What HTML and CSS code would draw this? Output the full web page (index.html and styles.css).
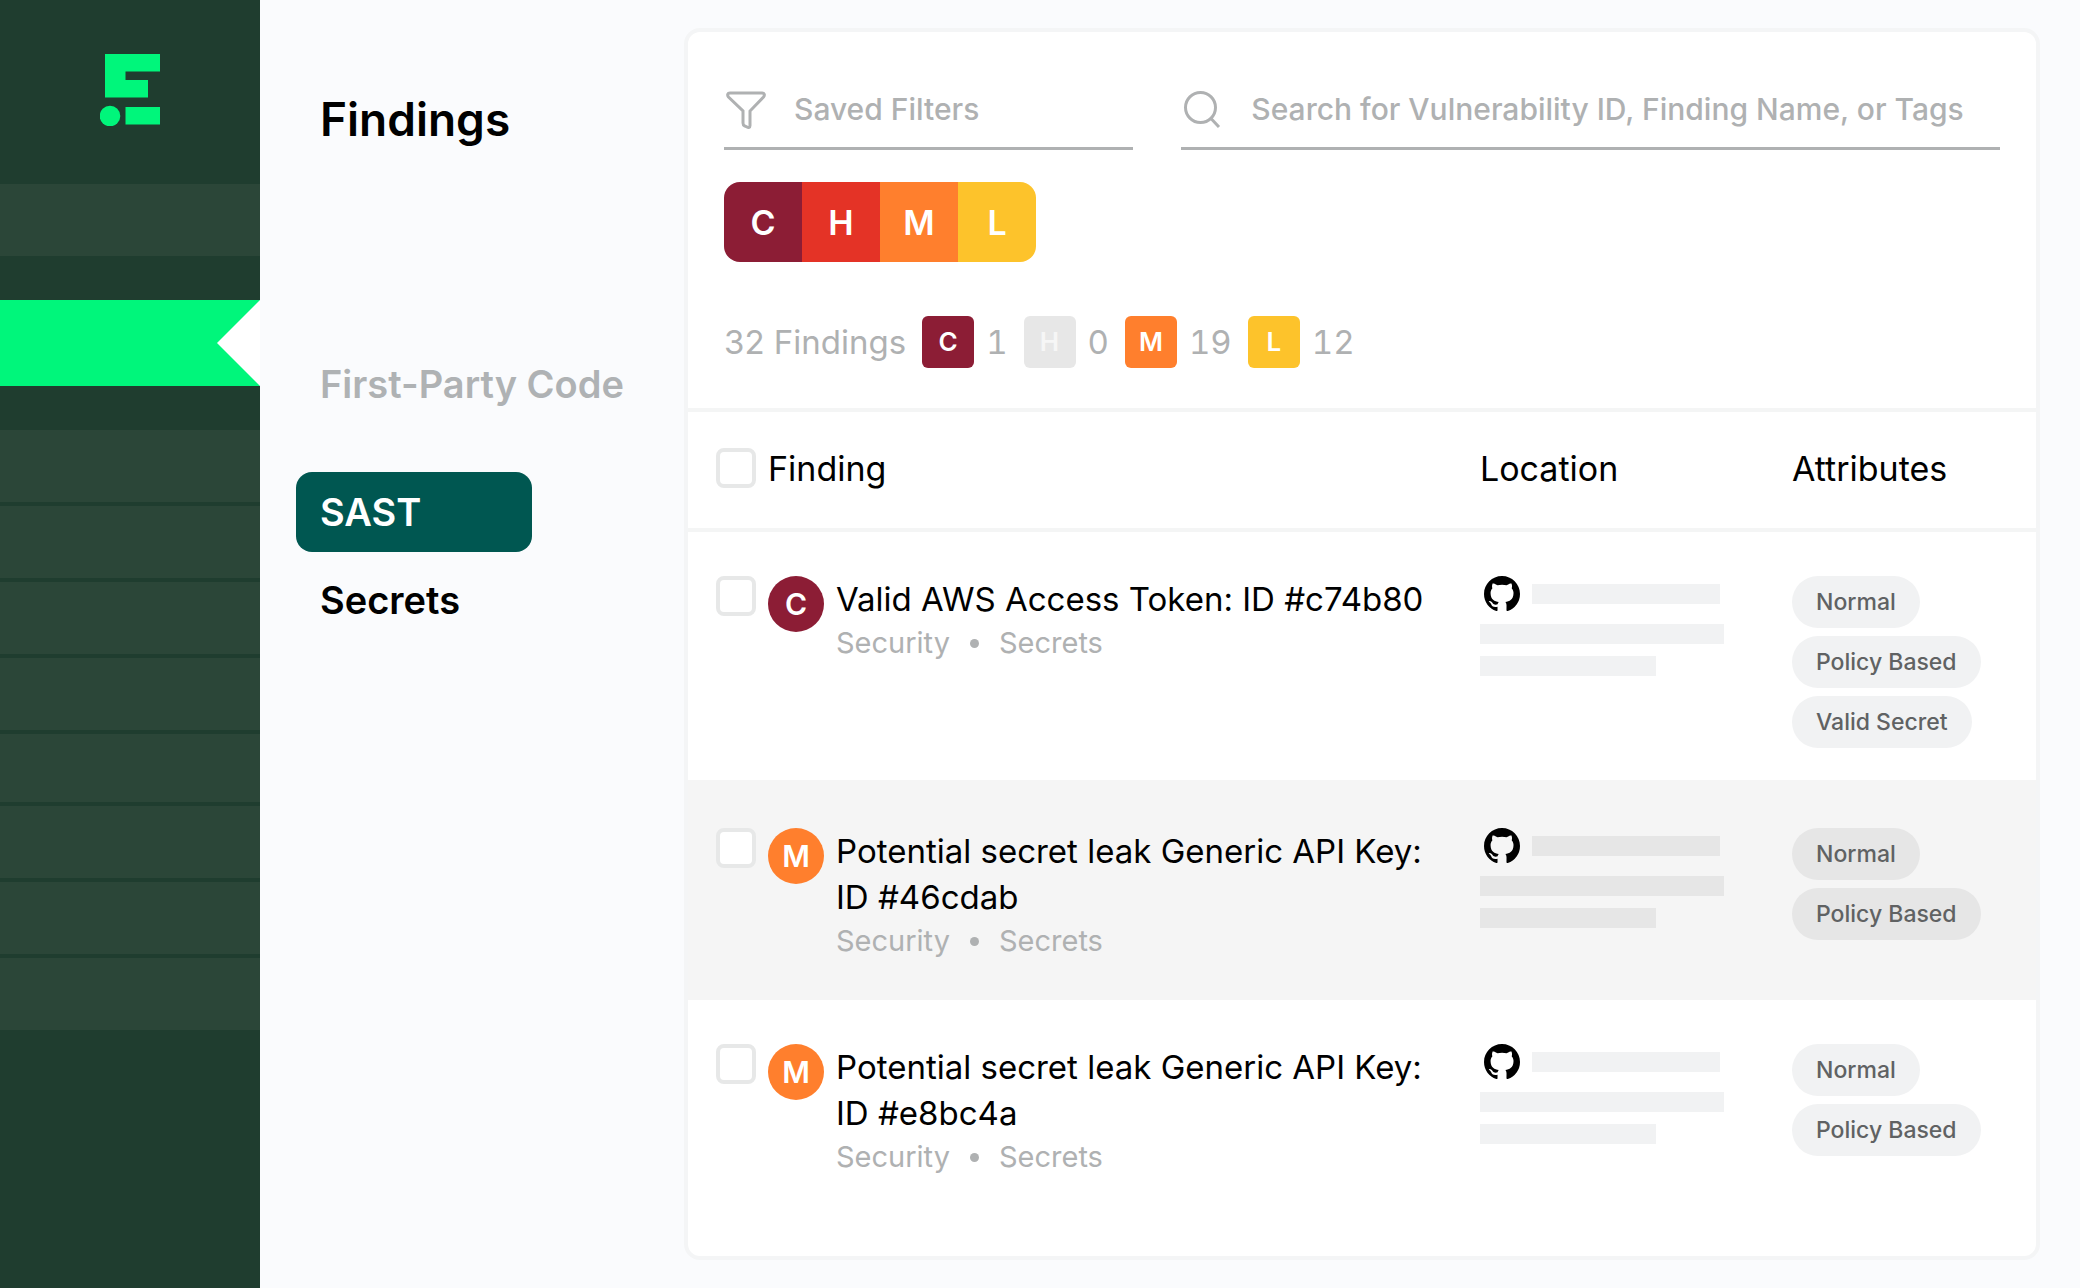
FILE: index.html
```
<!DOCTYPE html>
<html lang="en">
    <head>
        <meta charset="UTF-8">
        <meta name="viewport" content="width=device-width, initial-scale=1.0">
        <title>Findings</title>
        <link rel="stylesheet" href="styles.css">
    </head>
    <body>
        <svg class="sprite" aria-hidden="true">
            <symbol id="github" viewBox="0 0 16 16">
                <path d="M8 0C3.58 0 0 3.58 0 8c0 3.54 2.29 6.53 5.47 7.59.4.07.55-.17.55-.38 0-.19-.01-.82-.01-1.49-2.01.37-2.53-.49-2.69-.94-.09-.23-.48-.94-.82-1.13-.28-.15-.68-.52-.01-.53.63-.01 1.08.58 1.23.82.72 1.21 1.87.87 2.33.66.07-.52.28-.87.51-1.07-1.78-.2-3.64-.89-3.64-3.95 0-.87.31-1.59.82-2.15-.08-.2-.36-1.02.08-2.12 0 0 .67-.21 2.2.82.64-.18 1.32-.27 2-.27s1.36.09 2 .27c1.53-1.04 2.2-.82 2.2-.82.44 1.1.16 1.92.08 2.12.51.56.82 1.27.82 2.15 0 3.07-1.87 3.75-3.65 3.95.29.25.54.73.54 1.48 0 1.07-.01 1.93-.01 2.2 0 .21.15.46.55.38A8.01 8.01 0 0 0 16 8c0-4.42-3.58-8-8-8z"/>
            </symbol>
        </svg>

        <div class="app">
            <nav class="sidebar" aria-label="Main">
                <a href="#" class="logo" aria-label="Home">
                    <svg width="60" height="72" viewBox="0 0 60 72" fill="#00f67b">
                        <path d="M5 0h55v17.5H25.5v8.5H48v17.5H5z"/>
                        <circle cx="10" cy="62" r="10.3"/>
                        <path d="M25.5 53H60v17.5H25.5z"/>
                    </svg>
                </a>
                <a href="#" class="sidebar-item" aria-label="Dashboard"></a>
                <a href="#" class="sidebar-item active" aria-label="Findings"></a>
                <div class="sidebar-group">
                    <a href="#" class="sidebar-item" aria-label="Item 1"></a>
                    <a href="#" class="sidebar-item" aria-label="Item 2"></a>
                    <a href="#" class="sidebar-item" aria-label="Item 3"></a>
                    <a href="#" class="sidebar-item" aria-label="Item 4"></a>
                    <a href="#" class="sidebar-item short" aria-label="Item 5"></a>
                    <a href="#" class="sidebar-item" aria-label="Item 6"></a>
                    <a href="#" class="sidebar-item" aria-label="Item 7"></a>
                    <a href="#" class="sidebar-item" aria-label="Item 8"></a>
                </div>
            </nav>

            <aside class="subnav">
                <h1>Findings</h1>
                <h2>First-Party Code</h2>
                <a href="#" class="subnav-link selected">SAST</a>
                <a href="#" class="subnav-link">Secrets</a>
            </aside>

            <main class="panel">
                <div class="toolbar">
                    <div class="fields">
                        <button type="button" class="field">
                            <svg class="field-icon" viewBox="0 0 42 40">
                                <path d="M6 4H38C40.5 4 41 6 39.5 8L26 22V36.500C26 38.500 24.500 39 23 38L20.500 36.800C19.500 36.300 19 35.500 19 34V22L4.500 8C3 6 3.500 4 6 4Z"/>
                            </svg>
                            Saved Filters
                        </button>
                        <label class="field">
                            <svg class="field-icon" viewBox="0 0 42 40">
                                <circle cx="19.500" cy="18.500" r="15"/>
                                <path d="M29.500 29L38 38"/>
                            </svg>
                            <input type="text" placeholder="Search for Vulnerability ID, Finding Name, or Tags" aria-label="Search">
                        </label>
                    </div>

                    <div class="severity-filter">
                        <button type="button" class="critical">C</button>
                        <button type="button" class="high">H</button>
                        <button type="button" class="medium">M</button>
                        <button type="button" class="low">L</button>
                    </div>

                    <div class="summary">
                        <span>32 Findings</span>
                        <span class="count"><b class="badge critical">C</b>1</span>
                        <span class="count"><b class="badge none">H</b>0</span>
                        <span class="count"><b class="badge medium">M</b>19</span>
                        <span class="count"><b class="badge low">L</b>12</span>
                    </div>
                </div>

                <table class="findings">
                    <thead>
                        <tr>
                            <th class="col-check"><input type="checkbox" aria-label="Select all"></th>
                            <th>Finding</th>
                            <th class="col-location">Location</th>
                            <th class="col-attributes">Attributes</th>
                        </tr>
                    </thead>
                    <tbody>
                        <tr>
                            <td><input type="checkbox" aria-label="Select #c74b80"></td>
                            <td>
                                <div class="finding">
                                    <span class="dot critical">C</span>
                                    <div>
                                        <p class="title">Valid AWS Access Token: ID #c74b80</p>
                                        <p class="tags">Security <i></i> Secrets</p>
                                    </div>
                                </div>
                            </td>
                            <td>
                                <div class="repo"><svg><use href="#github"/></svg><span class="bar"></span></div>
                                <div class="bar long"></div>
                                <div class="bar short"></div>
                            </td>
                            <td>
                                <div class="pills">
                                    <span class="pill">Normal</span>
                                    <span class="pill">Policy Based</span>
                                    <span class="pill">Valid Secret</span>
                                </div>
                            </td>
                        </tr>
                        <tr class="hovered">
                            <td><input type="checkbox" aria-label="Select #46cdab"></td>
                            <td>
                                <div class="finding">
                                    <span class="dot medium">M</span>
                                    <div>
                                        <p class="title">Potential secret leak Generic API Key: ID&nbsp;#46cdab</p>
                                        <p class="tags">Security <i></i> Secrets</p>
                                    </div>
                                </div>
                            </td>
                            <td>
                                <div class="repo"><svg><use href="#github"/></svg><span class="bar"></span></div>
                                <div class="bar long"></div>
                                <div class="bar short"></div>
                            </td>
                            <td>
                                <div class="pills">
                                    <span class="pill">Normal</span>
                                    <span class="pill">Policy Based</span>
                                </div>
                            </td>
                        </tr>
                        <tr>
                            <td><input type="checkbox" aria-label="Select #e8bc4a"></td>
                            <td>
                                <div class="finding">
                                    <span class="dot medium">M</span>
                                    <div>
                                        <p class="title">Potential secret leak Generic API Key: ID&nbsp;#e8bc4a</p>
                                        <p class="tags">Security <i></i> Secrets</p>
                                    </div>
                                </div>
                            </td>
                            <td>
                                <div class="repo"><svg><use href="#github"/></svg><span class="bar"></span></div>
                                <div class="bar long"></div>
                                <div class="bar short"></div>
                            </td>
                            <td>
                                <div class="pills">
                                    <span class="pill">Normal</span>
                                    <span class="pill">Policy Based</span>
                                </div>
                            </td>
                        </tr>
                    </tbody>
                </table>
            </main>
        </div>
    </body>
</html>
```

FILE: styles.css
```
* {
    margin: 0;
    padding: 0;
    box-sizing: border-box;
}

body {
    background-color: #fafbfd;
    color: #000;
    font-family: Inter, 'Liberation Sans', sans-serif;
}

button,
input {
    font: inherit;
    color: inherit;
    border: none;
    background: none;
}

a {
    color: inherit;
    text-decoration: none;
}

.sprite {
    display: none;
}

.app {
    display: grid;
    grid-template-columns: 260px 424px minmax(0, 1fr);
    min-height: 100vh;
}

/* Severity colours */
.critical {
    background-color: #8c1d35;
}

.high {
    background-color: #e43326;
}

.medium {
    background-color: #ff7f2d;
}

.low {
    background-color: #fdc32b;
}

.none {
    background-color: #e7e7e7;
}

/* Sidebar */
.sidebar {
    background-color: #1f3d2f;
    display: flex;
    flex-direction: column;
}

.logo {
    height: 184px;
    padding: 54px 0 0 100px;
}

.logo svg {
    display: block;
}

.sidebar-item {
    display: block;
    height: 72px;
    background-color: #2b4638;
}

.sidebar-item.short {
    height: 68px;
}

.sidebar-item.active {
    height: 86px;
    margin: 44px 0;
    background-color: #00f67b;
    position: relative;
}

.sidebar-item.active::after {
    content: '';
    position: absolute;
    top: 0;
    right: 0;
    width: 43px;
    height: 100%;
    background-color: #fff;
    clip-path: polygon(100% 0, 0 50%, 100% 100%);
}

.sidebar-group {
    display: flex;
    flex-direction: column;
    gap: 4px;
}

/* Second level navigation */
.subnav {
    padding: 91px 36px 0;
    font-weight: 600;
    font-size: 38px;
}

.subnav h1 {
    font-size: 46px;
    font-weight: 600;
    line-height: 56px;
    padding-left: 24px;
    margin-bottom: 213px;
}

.subnav h2 {
    font-size: 38px;
    font-weight: 600;
    line-height: 48px;
    color: #afb2b4;
    padding-left: 24px;
    margin-bottom: 64px;
    white-space: nowrap;
}

.subnav-link {
    display: block;
    width: 236px;
    line-height: 80px;
    padding: 0 24px;
    border-radius: 16px;
    margin-bottom: 8px;
}

.subnav-link.selected {
    background-color: #005751;
    color: #fff;
}

/* Panel */
.panel {
    margin: 28px 40px 28px 0;
    border: 4px solid #f4f5f6;
    border-radius: 16px;
    background-color: #fff;
}

.toolbar {
    padding: 40px 36px;
    border-bottom: 4px solid #f4f5f5;
}

.fields {
    display: grid;
    grid-template-columns: 1fr 2fr;
    gap: 48px;
}

.field {
    display: flex;
    align-items: center;
    gap: 28px;
    height: 78px;
    padding-bottom: 2px;
    border-bottom: 3px solid #afb1b2;
    color: #afb1b2;
    font-size: 30px;
    font-weight: 500;
}

.field-icon {
    width: 42px;
    height: 40px;
    flex: none;
    fill: none;
    stroke: #afb1b2;
    stroke-width: 3;
    overflow: visible;
}

.field input {
    flex: 1;
    min-width: 0;
    outline: none;
}

.field input::placeholder {
    color: #afb1b2;
    opacity: 1;
}

.severity-filter {
    display: flex;
    width: 312px;
    margin-top: 32px;
    border-radius: 16px;
    overflow: hidden;
}

.severity-filter button {
    flex: 1;
    height: 80px;
    color: #fff;
    font-size: 34px;
    font-weight: 600;
}

.summary {
    display: flex;
    align-items: center;
    gap: 16px;
    margin-top: 54px;
    color: #afb1b2;
    font-size: 33px;
}

.count {
    display: flex;
    align-items: center;
    gap: 12px;
    font-variant-numeric: tabular-nums;
}

.badge {
    width: 52px;
    border-radius: 6px;
    color: #fff;
    font-size: 26px;
    font-weight: 600;
    line-height: 52px;
    text-align: center;
}

.badge.none {
    color: #f6f6f6;
}

/* Table */
.findings {
    width: 100%;
    border-spacing: 0;
    table-layout: fixed;
}

.findings th {
    height: 120px;
    padding-bottom: 4px;
    border-bottom: 4px solid #f4f5f5;
    font-size: 34px;
    font-weight: 400;
    text-align: left;
}

.findings td {
    padding: 44px 0 32px;
    vertical-align: top;
}

.findings .hovered td {
    padding: 48px 0 38px;
    background-color: #f5f5f5;
}

.findings .col-check {
    width: 80px;
}

.findings .col-location {
    width: 312px;
}

.findings .col-attributes {
    width: 244px;
}

.findings input {
    appearance: none;
    display: block;
    width: 40px;
    height: 40px;
    margin-left: 28px;
    border: 4px solid #e7e8e8;
    border-radius: 8px;
    background-color: #fff;
}

.finding {
    display: flex;
    gap: 12px;
    padding-right: 40px;
}

.dot {
    flex: none;
    width: 56px;
    height: 56px;
    border-radius: 50%;
    color: #fff;
    font-size: 30px;
    font-weight: 600;
    line-height: 56px;
    text-align: center;
}

.title {
    font-size: 33px;
    line-height: 46px;
}

.tags {
    display: flex;
    align-items: center;
    gap: 20px;
    color: #afb1b2;
    font-size: 29px;
    line-height: 42px;
}

.tags i {
    width: 9px;
    height: 9px;
    border-radius: 50%;
    background-color: #afb1b2;
}

.repo {
    display: flex;
    align-items: center;
    gap: 12px;
    padding-left: 4px;
}

.repo svg {
    width: 36px;
    height: 36px;
}

.bar {
    width: 188px;
    height: 20px;
    background-color: #f1f2f3;
}

.bar.long {
    width: 244px;
    margin-top: 12px;
}

.bar.short {
    width: 176px;
    margin-top: 12px;
}

.pills {
    display: flex;
    flex-direction: column;
    align-items: flex-start;
    gap: 8px;
}

.pill {
    padding: 0 24px;
    border-radius: 26px;
    background-color: #f1f2f3;
    color: #606263;
    font-size: 23px;
    font-weight: 500;
    line-height: 52px;
}

.hovered .bar,
.hovered .pill {
    background-color: #e6e6e6;
}
```
